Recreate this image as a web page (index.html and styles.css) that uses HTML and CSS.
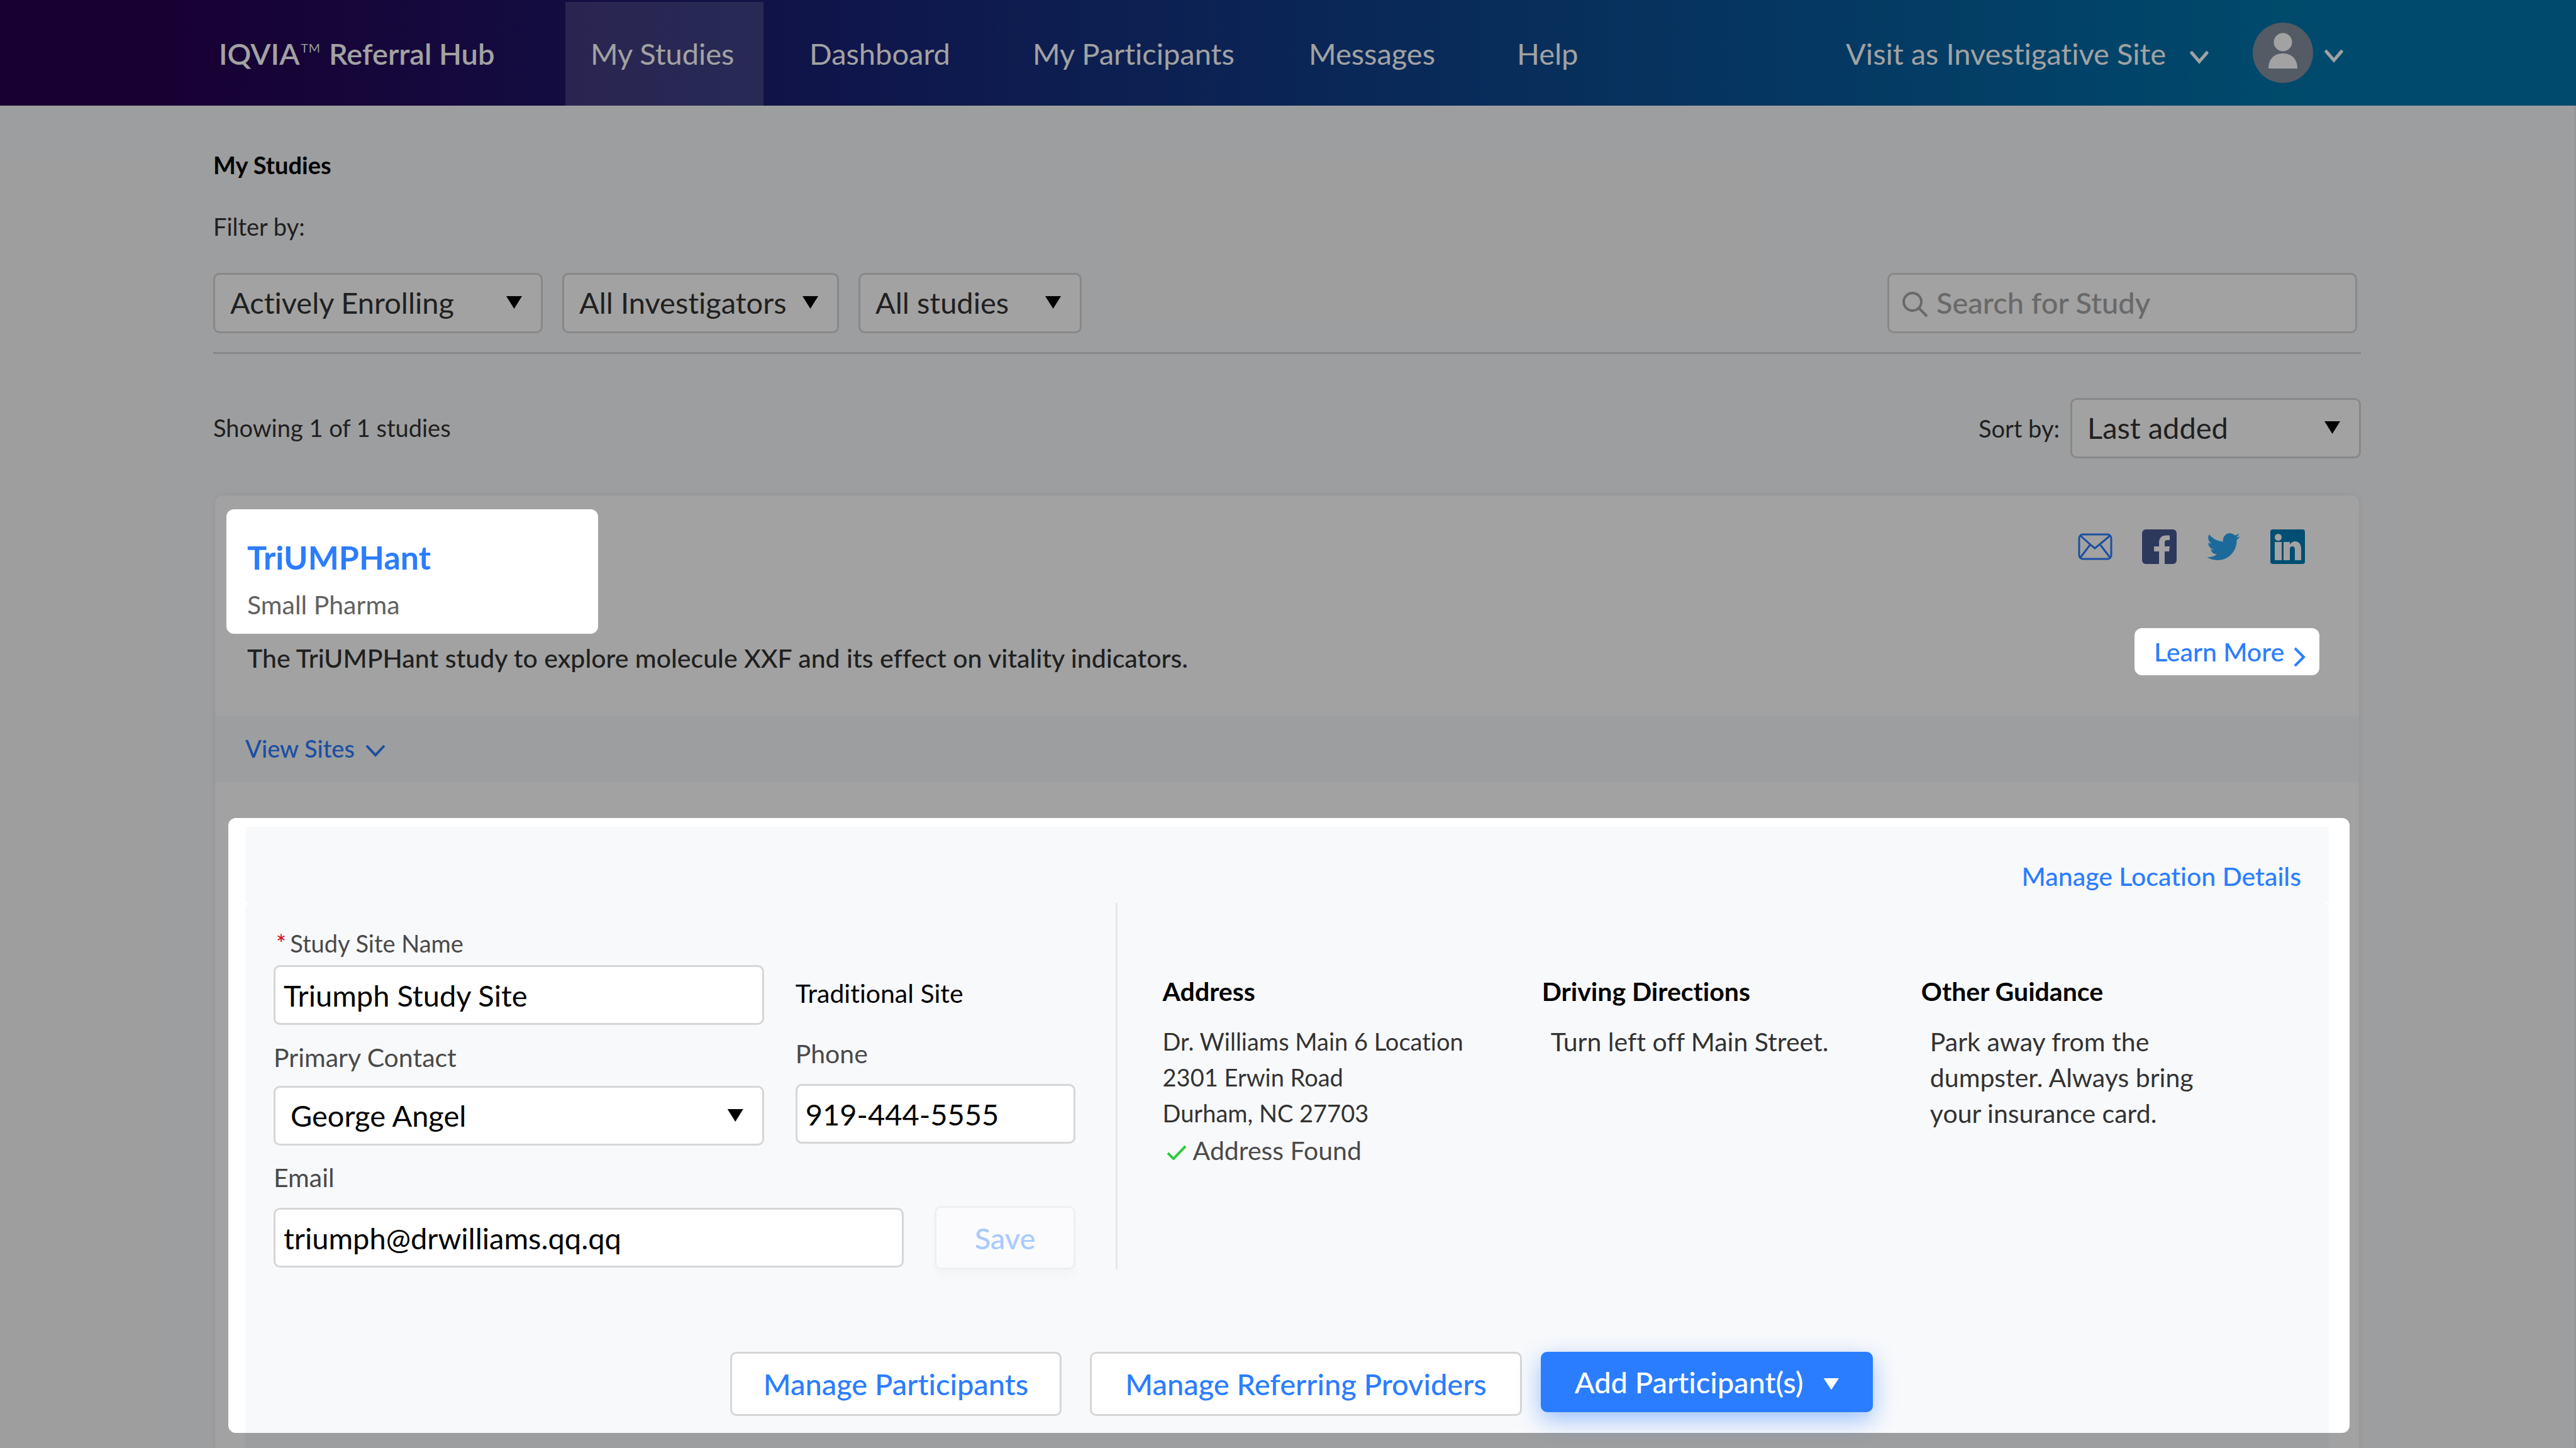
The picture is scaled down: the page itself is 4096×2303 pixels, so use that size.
FILE: index.html
```html
<!DOCTYPE html>
<html lang="en">
<head>
<meta charset="utf-8">
<title>My Studies</title>
<link rel="stylesheet" href="styles.css">
</head>
<body>
<header class="topbar">
  <a class="brand" href="#">IQVIA<span class="tm">™</span> Referral Hub</a>
  <nav class="nav">
    <a class="nav-link active" href="#">My Studies</a>
    <a class="nav-link" href="#">Dashboard</a>
    <a class="nav-link" href="#">My Participants</a>
    <a class="nav-link" href="#">Messages</a>
    <a class="nav-link" href="#">Help</a>
  </nav>
  <button class="visit" type="button">Visit as Investigative Site
    <svg class="chev" viewBox="0 0 30 22"><path d="M3 4l12 14L27 4"/></svg>
  </button>
  <button class="account" type="button" aria-label="Account">
    <svg class="avatar" viewBox="0 0 96 96"><circle cx="48" cy="48" r="48" fill="#848f9f"/><circle cx="48" cy="31" r="14.500" fill="#fff"/><path d="M25 73C25 57 35 49 48 49s23 8 23 24z" fill="#fff"/></svg>
    <svg class="chev" viewBox="0 0 30 22"><path d="M3 4l12 14L27 4"/></svg>
  </button>
</header>

<main class="page">
  <h1 class="page-title">My Studies</h1>
  <p class="filter-label">Filter by:</p>
  <div class="filters">
    <span class="select status"><select aria-label="Status"><option>Actively Enrolling</option></select></span>
    <span class="select investigators"><select aria-label="Investigators"><option>All Investigators</option></select></span>
    <span class="select studies"><select aria-label="Studies"><option>All studies</option></select></span>
    <label class="search">
      <svg viewBox="0 0 42 42"><circle cx="17" cy="17" r="14"/><path d="M27 27l13 13"/></svg>
      <input type="text" placeholder="Search for Study" aria-label="Search for Study">
    </label>
  </div>

  <div class="results">
    <p class="count">Showing 1 of 1 studies</p>
    <label class="sort-label" for="sort">Sort by:</label>
    <span class="select sort"><select id="sort"><option>Last added</option></select></span>
  </div>

  <article class="card">
    <div class="card-head">
      <div class="card-main">
        <div class="study lit">
          <h2 class="study-name"><a href="#">TriUMPHant</a></h2>
          <p class="sponsor">Small Pharma</p>
        </div>
        <p class="summary">The TriUMPHant study to explore molecule XXF and its effect on vitality indicators.</p>
      </div>
      <div class="card-side">
        <div class="share">
          <a href="#" aria-label="Email"><svg viewBox="0 0 55 55" fill="none" stroke="#2b7dff" stroke-width="3"><rect x="2" y="8" width="51" height="39" rx="6"/><path d="M4 10l18 16 5 4 5-4 19-16M3 46l16-21M52 46L36 25"/></svg></a>
          <a href="#" aria-label="Facebook"><svg viewBox="0 0 55 55"><rect width="55" height="55" rx="6" fill="#475993"/><path d="M27 55V35H19V27H27V21c0-7 4-11.500 11-11.500H44V17H40c-3 0-4 1.500-4 4v6h8l-1 8H36V55z" fill="#fff"/></svg></a>
          <a href="#" aria-label="Twitter"><svg viewBox="-0.500 -0.500 25 25"><path fill="#2ca8f4" d="M23.953 4.570a10 10 0 01-2.825.775 4.958 4.958 0 002.163-2.723c-.951.555-2.005.959-3.127 1.184a4.920 4.920 0 00-8.384 4.482C7.690 8.095 4.067 6.130 1.640 3.162a4.822 4.822 0 00-.666 2.475c0 1.710.870 3.213 2.188 4.096a4.904 4.904 0 01-2.228-.616v.060a4.923 4.923 0 003.946 4.827 4.996 4.996 0 01-2.212.085 4.936 4.936 0 004.604 3.417 9.867 9.867 0 01-6.102 2.105c-.390 0-.779-.023-1.170-.067a13.995 13.995 0 007.557 2.209c9.053 0 13.998-7.496 13.998-13.985 0-.210 0-.420-.015-.630A9.935 9.935 0 0024 4.590z"/></svg></a>
          <a href="#" aria-label="LinkedIn"><svg viewBox="0 0 55 55"><rect width="55" height="55" rx="4" fill="#007bb5"/><circle cx="12.500" cy="12.500" r="5.500" fill="#fff"/><path d="M7 20h11v29H7zM21 20h10v4c2-3 5-5 8-5 7 0 10 5 10 12v18H39V33c0-4-1-6-4-6s-4 2-4 6v16H21z" fill="#fff"/></svg></a>
        </div>
        <a class="learn lit" href="#">Learn More
          <svg viewBox="0 0 20 32"><path d="M3 2l14 14L3 30"/></svg>
        </a>
      </div>
    </div>

    <div class="sites-bar">
      <a class="view-sites" href="#">View Sites
        <svg viewBox="0 0 32 22"><path d="M2 3l14 15L30 3"/></svg>
      </a>
    </div>

    <div class="card-body">
      <section class="site lit">
        <div class="site-top"><a href="#">Manage Location Details</a></div>
        <div class="site-panel">
          <div class="site-columns">
            <form class="site-form">
              <div class="pair">
                <div class="col">
                  <label class="label required" for="site-name"><span class="star">*</span>Study Site Name</label>
                  <input class="field site-name" id="site-name" type="text" value="Triumph Study Site">
                  <label class="label" for="contact">Primary Contact</label>
                  <span class="select contact"><select id="contact"><option>George Angel</option></select></span>
                </div>
                <div class="col col-phone">
                  <p class="site-type">Traditional Site</p>
                  <label class="label" for="phone">Phone</label>
                  <input class="field phone" id="phone" type="text" value="919-444-5555">
                </div>
              </div>
              <label class="label email-label" for="email">Email</label>
              <div class="email-row">
                <input class="field email" id="email" type="text" value="triumph@drwilliams.qq.qq">
                <button class="save" type="button" disabled>Save</button>
              </div>
            </form>
            <div class="site-info">
              <div class="info">
                <h3>Address</h3>
                <address>Dr. Williams Main 6 Location<br>2301 Erwin Road<br>Durham, NC 27703</address>
                <p class="found"><svg viewBox="0 0 32 24"><path d="M2 13l9 9L30 2"/></svg>Address Found</p>
              </div>
              <div class="info">
                <h3>Driving Directions</h3>
                <p class="note">Turn left off Main Street.</p>
              </div>
              <div class="info">
                <h3>Other Guidance</h3>
                <p class="note">Park away from the<br>dumpster. Always bring<br>your insurance card.</p>
              </div>
            </div>
          </div>
          <div class="actions">
            <button class="btn participants" type="button">Manage Participants</button>
            <button class="btn providers" type="button">Manage Referring Providers</button>
            <button class="btn primary" type="button">Add Participant(s)</button>
          </div>
        </div>
      </section>
      <div class="panel-rest"></div>
    </div>
  </article>
</main>
<div class="dim"></div>
</body>
</html>
```
FILE: styles.css
```css
:root {
  --text-s: 38px;
  --text-m: 41px;
  --text-l: 47px;
  --text-xl: 52px;
  --blue: #2b7dff;
  --line: #d6d6d6;
  --panel: #f8f9fb;
}

* { box-sizing: border-box; margin: 0; }

body {
  position: relative;
  min-height: 100vh;
  background: var(--panel);
  color: #333;
  font-family: Lato, "Liberation Sans", sans-serif;
  font-size: var(--text-m);
  font-variant-ligatures: none;
}

a { color: var(--blue); text-decoration: none; }
svg { display: block; flex: none; }
button, input, select { font: inherit; font-variant-ligatures: none; color: inherit; }
button { border: 0; background: none; padding: 0; }

/* Grey layer over the page; highlighted regions sit above it */
.dim {
  position: absolute;
  inset: 0;
  z-index: 1;
  background: rgba(0, 0, 0, 0.365);
  pointer-events: none;
}

.lit {
  position: relative;
  z-index: 2;
  background: #fff;
  border-radius: 12px;
}

/* Top bar */
.topbar {
  display: flex;
  height: 168px;
  padding: 0 370px 0 348px;
  background: linear-gradient(90deg, #270050 6%, #192376 33%, #0a5297 66%, #0077ac 90%);
  color: #fff;
  font-size: var(--text-l);
  line-height: 165px;
  white-space: nowrap;
}

.brand { width: 551px; padding-top: 3px; color: #fff; font-weight: 600; }
.tm { font-weight: 300; }

.nav {
  display: grid;
  grid-template-columns: 388px 355px 439px 331px auto;
  margin-right: auto;
}

.nav-link { padding-top: 3px; color: #fff; }

.nav-link.active {
  width: 315px;
  margin-top: 3px;
  padding: 0 0 0 40px;
  background: rgba(255, 255, 255, 0.16);
}

.visit, .account { display: flex; align-items: center; }
.visit { gap: 38px; margin-right: 70px; padding-top: 3px; }
.account { gap: 18px; }
.chev { width: 30px; height: 22px; margin-top: 10px; fill: none; stroke: #fff; stroke-width: 5; stroke-linecap: round; }
.avatar { width: 96px; height: 96px; }

/* Page */
.page { padding: 70px 339px 0; border-right: 3px solid #ecedef; }
.page-title { color: #000; font-size: var(--text-s); font-weight: 700; line-height: 48px; }
.filter-label { margin-top: 50px; font-size: var(--text-s); line-height: 48px; }

.filters {
  display: flex;
  gap: 31px;
  margin-top: 50px;
  padding-bottom: 30px;
  padding-right: 6px;
  border-bottom: 3px solid var(--line);
}

.select { position: relative; display: block; }

.select select {
  display: block;
  width: 100%;
  height: 96px;
  padding: 0 24px 2px;
  appearance: none;
  border: 3px solid var(--line);
  border-radius: 10px;
  background: #fff;
  font-size: var(--text-l);
}

.select::after {
  content: "";
  position: absolute;
  top: 37px;
  right: 33px;
  width: 25px;
  height: 20px;
  background: #000;
  clip-path: polygon(0 0, 100% 0, 50% 100%);
  pointer-events: none;
}

.status { width: 524px; }
.investigators { width: 440px; }
.studies { width: 355px; }
.sort { width: 462px; }

.search {
  display: flex;
  align-items: center;
  gap: 13px;
  width: 747px;
  height: 96px;
  margin-left: auto;
  padding: 0 20px;
  border: 3px solid var(--line);
  border-radius: 10px;
  background: #fff;
}

.search svg { width: 42px; height: 42px; margin-top: 4px; fill: none; stroke: #a5a5a5; stroke-width: 4; }
.search input { flex: 1; min-width: 0; padding: 0 0 2px; border: 0; background: none; font-size: var(--text-l); font-weight: 500; }
.search input::placeholder { color: #a5a5a5; opacity: 1; }

.results { display: flex; align-items: center; margin-top: 70px; font-size: var(--text-s); }
.count { margin-right: auto; padding-bottom: 3px; }
.sort-label { margin-right: 17px; }

/* Study card */
.card {
  margin: 59px 3px 0;
  border-radius: 12px 12px 0 0;
  background: #fff;
  box-shadow: 0 0 10px rgba(0, 0, 0, 0.08);
}

.card-head { display: flex; justify-content: space-between; padding: 22px 63px 63px 18px; }
.study { width: 591px; padding: 44px 33px 18px; }
.study-name { font-size: var(--text-xl); font-weight: 700; line-height: 64px; }
.sponsor { margin-top: 16px; color: #616161; line-height: 56px; }
.summary { margin: 11px 0 0 33px; font-weight: 500; line-height: 56px; }

.share { display: flex; gap: 47px; padding: 32px 23px 0 0; justify-content: flex-end; }
.share svg { width: 55px; height: 55px; }

.learn {
  display: flex;
  align-items: center;
  justify-content: space-between;
  width: 294px;
  height: 75px;
  margin: 102px 0 0 auto;
  padding: 0 22px 0 31px;
  font-weight: 500;
}

.learn svg { width: 20px; height: 32px; margin-top: 16px; fill: none; stroke: var(--blue); stroke-width: 4; }

.sites-bar { padding: 0 0 2px 48px; background: var(--panel); font-size: var(--text-s); font-weight: 500; line-height: 104px; }
.view-sites { display: flex; align-items: center; gap: 17px; }
.view-sites svg { width: 32px; height: 22px; margin-top: 8px; fill: none; stroke: var(--blue); stroke-width: 4; }

.card-body { padding: 57px 15px 0 21px; }
.site { padding: 14px 33px 0 27px; }
.site-top { padding: 51px 44px 14px; background: var(--panel); font-weight: 500; line-height: 56px; text-align: right; }
.site-panel { padding-bottom: 27px; border-radius: 10px 10px 0 0; background: var(--panel); }
.panel-rest { height: 24px; margin: 0 33px 0 27px; background: var(--panel); }

.site-columns { display: grid; grid-template-columns: 1384fr 1930fr; }

/* Site form */
.site-form { padding: 40px 64px 0 45px; }
.pair { display: grid; grid-template-columns: 780fr 445fr; gap: 50px; }
.col { display: flex; flex-direction: column; }
.col-phone { padding-top: 80px; }
.label { color: #4a4a4a; font-size: var(--text-m); line-height: 48px; }
.star { margin-right: 6px; color: #d0021b; }
.required { padding-left: 4px; font-size: var(--text-s); }

.field {
  display: block;
  width: 100%;
  height: 95px;
  padding: 0 13px;
  border: 3px solid var(--line);
  border-radius: 10px;
  background: #fff;
  color: #000;
  font-size: var(--text-l);
}

.site-name { margin: 11px 0 28px; }
.contact { margin-top: 21px; }
.contact select { height: 95px; color: #000; }
.site-type { color: #000; line-height: 48px; }
.col-phone .label { margin: 48px 0 24px; }
.email-label { display: block; margin: 27px 0 21px; }
.email-row { display: grid; grid-template-columns: 1002fr 223fr; gap: 49px; align-items: center; }

.save {
  height: 101px;
  border: 3px solid #eeeff1;
  border-radius: 10px;
  background: #fbfbfd;
  box-shadow: 0 12px 12px rgba(0, 0, 0, 0.02);
  color: #a9cbff;
  font-size: var(--text-l);
  font-weight: 500;
}

/* Site information */
.site-info {
  display: grid;
  grid-template-columns: 603fr 603fr 648fr;
  padding: 117px 0 0 72px;
  border-left: 3px solid #e6e7ea;
}

.info h3 { margin-bottom: 27px; color: #000; font-size: var(--text-m); font-weight: 700; line-height: 48px; }
.info address { font-size: var(--text-s); font-style: normal; line-height: 57px; }
.found { display: flex; align-items: center; gap: 10px; padding: 2px 0 0 6px; color: #4a4a4a; line-height: 57px; }
.found svg { width: 32px; height: 24px; margin-top: 6px; fill: none; stroke: #2ecc40; stroke-width: 4; }
.note { padding-left: 14px; line-height: 57px; }

/* Actions */
.actions { display: flex; justify-content: center; margin-top: 131px; padding-left: 46px; }

.btn {
  height: 102px;
  border: 3px solid var(--line);
  border-radius: 10px;
  background: #fff;
  color: var(--blue);
  font-size: var(--text-l);
  font-weight: 500;
}

.participants { width: 527px; margin-right: 45px; }
.providers { width: 687px; margin-right: 30px; }

.primary {
  display: flex;
  align-items: center;
  justify-content: center;
  gap: 32px;
  width: 528px;
  height: 96px;
  border: 0;
  background: var(--blue);
  box-shadow: 0 12px 36px rgba(43, 125, 255, 0.45);
  color: #fff;
}

.primary::after {
  content: "";
  width: 25px;
  height: 19px;
  margin-top: 6px;
  background: #fff;
  clip-path: polygon(0 0, 100% 0, 50% 100%);
}
```
